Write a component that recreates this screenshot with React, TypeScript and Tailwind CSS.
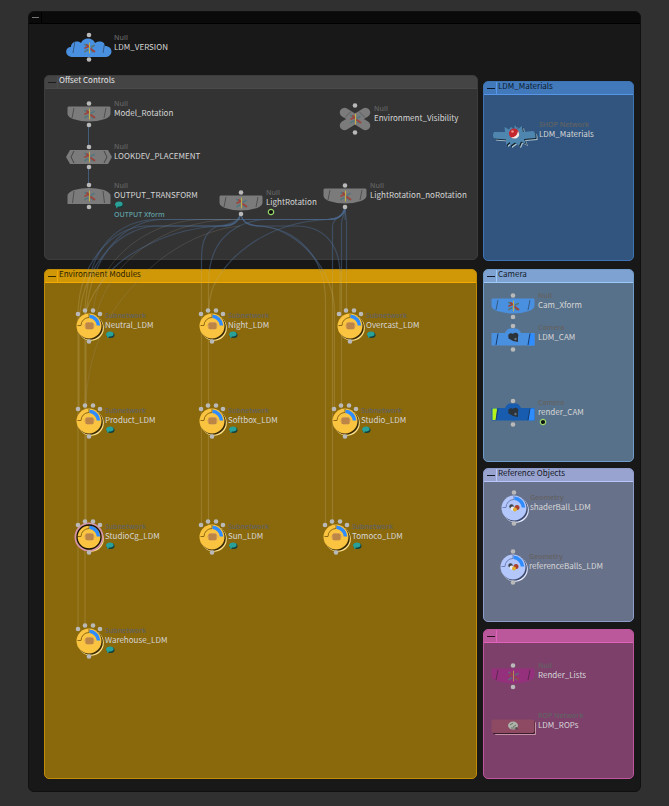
import type { ReactNode } from "react";

type Kind =
  | "cloud"
  | "bowl"
  | "hex"
  | "dome"
  | "cross"
  | "subnet"
  | "burst"
  | "camera"
  | "geometry"
  | "rop";

interface NodeData {
  kind: Kind;
  x: number;
  y: number;
  name: string;
  type: string;
  fill?: string;
  comment?: string;
  bubble?: boolean;
  badge?: boolean;
  selected?: boolean;
  dim?: boolean;
}

const GREY = "#7b7b7b";
const BLUE = "#4a90e0";

function Dot({ x, y }: { x: number; y: number }) {
  return <circle cx={x} cy={y} r="2.3" fill="#b9b9b9" />;
}

function AxisGlyph({ dim }: { dim?: boolean }) {
  return (
    <g strokeLinecap="round" opacity={dim ? 0.7 : 1}>
      <path d="M-4 3.500 L-1.500 2 M2.500 -1 L5 -2.500 M-4 -3.500 L-2.500 -2.500 M3 3 L4 3.500" stroke="#55777e" strokeWidth="2" />
      <path d="M-4 0 L-1.500 -1 M2 1 L5.500 3.500 M-2 -3 L-0.500 -1.500" stroke="#9c443c" strokeWidth="1.800" />
      <path d="M0.500 -5 V5" stroke="#c3b04a" strokeWidth="1" />
    </g>
  );
}

function Slashes({ x = 15, h = 5 }: { x?: number; h?: number }) {
  return (
    <path
      d={`M${-x + 1} ${-h - 2} L${-x - 1} ${h} M${x + 1} ${-h - 2} L${x - 1} ${h}`}
      stroke="#1a1a1a"
      strokeOpacity="0.45"
      fill="none"
    />
  );
}

function Spark({ fill }: { fill: string }) {
  return (
    <path
      d="M-20 -3 L-9 -3 L-9.500 -8 L-5 -5.500 L-3 -8 L0 -6 L1 -10 L4 -6 L8 -9 L9 -3 L19 -4 Q22 -3 21.500 3 L10 4 L12 9 L7 6.500 L5 11 L1 7.500 L-4 11 L-4 7 L-8 10 L-8 4.500 L-20 3.500 Q-22 0 -20 -3 Z"
      fill={fill}
    />
  );
}

function RoundBody({ kind, selected }: { kind: Kind; selected?: boolean }) {
  const geo = kind === "geometry";
  const fill = geo ? "#b4c7fb" : "#fac440";
  const edge = geo ? "#e4ebff" : "#ffe28c";
  const dark = geo ? "#3e4a6e" : "#3a2b05";
  return (
    <>
      <circle cx="2" cy="2" r="12.800" fill={edge} />
      <circle cx="1.200" cy="1.200" r="12.600" fill={dark} />
      {selected && <circle r="13.500" fill="none" stroke="#d493a8" strokeWidth="2" />}
      <circle r="12.500" fill={fill} />
      <path d="M-11.500 -0.500 H-8 A8 8 0 0 1 0 -8.500 V-12" stroke={geo ? "#6f80b8" : "#8d6a12"} fill="none" />
      <path d="M0.500 -9.800 A9.800 9.800 0 0 1 9.500 -0.500" stroke="#2f8cff" strokeWidth="3.600" fill="none" />
      {selected && <circle r="12" fill="none" stroke="#15110a" strokeWidth="1.300" />}
      {geo ? (
        <g>
          <circle cx="-2.500" cy="-1.500" r="2.200" fill="#3d4247" />
          <circle cx="-1.500" cy="0.500" r="2" fill="#e8ecf2" />
          <circle cx="3" cy="-0.500" r="2.500" fill="#a8402f" />
          <circle cx="1" cy="1.500" r="2" fill="#e0ae2c" />
        </g>
      ) : (
        <g>
          <rect x="-3.500" y="-4" width="8" height="7.500" rx="2" fill="#cf9a58" />
          <rect x="-4.500" y="-2" width="10" height="3.500" rx="1.500" fill="#cf9a58" />
          <path d="M-3.500 -2 H4.500 M-3 0 H4 M-3.500 2 H4.500" stroke="#a3682c" strokeWidth="0.800" />
        </g>
      )}
    </>
  );
}

const dots: Record<Kind, [number, number][]> = {
  cloud: [[0, -13], [0, 11.5]],
  bowl: [[0, -10.5], [0, 11]],
  hex: [[0, -10], [0, 10]],
  dome: [[0, -11], [0, 11]],
  cross: [[0, -13.5], [0, 13.5]],
  subnet: [[-11, -12], [-4, -15.5], [4, -15.5], [11, -12], [0, 15.5]],
  burst: [],
  camera: [[0, -12], [0, 11.5]],
  geometry: [[0, -15.5], [0, 15.5]],
  rop: [],
};

const box: Record<Kind, string> = {
  cloud: "-25 -20 50 40",
  bowl: "-25 -20 50 40",
  hex: "-25 -20 50 40",
  dome: "-25 -20 50 40",
  burst: "-25 -20 50 40",
  camera: "-25 -20 50 40",
  rop: "-25 -20 50 40",
  cross: "-19 -20 38 40",
  subnet: "-16 -20 32 40",
  geometry: "-16 -20 32 40",
};

function halfWidth(kind: Kind) {
  if (kind === "cross") return 19;
  return kind === "subnet" || kind === "geometry" ? 16 : 25;
}

function Body({ node }: { node: NodeData }) {
  const fill = node.fill ?? GREY;
  switch (node.kind) {
    case "cloud":
      return (
        <>
          <path
            d="M-17 9 C-25 8 -24 -1 -18 -1 C-18 -6 -12 -8 -8 -5 C-6 -11 4 -11 6 -5 C11 -8 16 -6 16 -2 C24 -2 25 8 17 9 Z"
            fill={BLUE}
          />
          <Slashes />
          <AxisGlyph />
        </>
      );
    case "bowl":
      return (
        <>
          <path d="M-20.500 -7.500 H20.500 Q21.500 -7.500 21.500 -6 V0 Q21 3 16 5 Q0 10 -16 5 Q-21 3 -21.500 0 V-6 Q-21.500 -7.500 -20.500 -7.500 Z" fill={fill} />
          <Slashes x={16} h={4} />
          <AxisGlyph dim={node.dim} />
        </>
      );
    case "hex":
      return (
        <>
          <path d="M-19 -7 H19 L23 0 L19 7 H-19 L-23 0 Z" fill={fill} />
          <path d="M-15 -6 L-18 0 L-15 6 M15 -6 L18 0 L15 6" stroke="#444" fill="none" />
          <AxisGlyph />
        </>
      );
    case "dome":
      return (
        <>
          <path d="M-21.500 8 V-1 Q-20 -4 -15 -6 Q0 -10 15 -6 Q20 -4 21.500 -1 V8 Z" fill={fill} />
          <path d="M-15 -5 L-16.500 7 M14 -5 L15.500 7" stroke="#1a1a1a" strokeOpacity="0.45" />
          <AxisGlyph />
        </>
      );
    case "cross":
      return (
        <>
          <path d="M-10.500 -6.500 L10.500 6.500 M10.500 -6.500 L-10.500 6.500" stroke={fill} strokeWidth="9.500" strokeLinecap="round" />
          <path d="M-10 -1.500 L-4 -7.500 M4 -7.500 L10 -1.500" stroke="#5c5c5c" />
          <AxisGlyph />
        </>
      );
    case "burst":
      return (
        <>
          <g transform="translate(2 2)"><Spark fill="#a9c3d2" /></g>
          <g transform="translate(1 1)"><Spark fill="#15222e" /></g>
          <Spark fill="#4f86b0" />
          <circle cx="0" cy="-1.500" r="5" fill="#c3262c" />
          <path d="M-3 2.500 Q3 2 4 -4 Q7 1 2.500 3.300 Q-1 4 -3 2.500 Z" fill="#f0e6e2" />
          <circle cx="-1.500" cy="-3.500" r="1.300" fill="#ef8f86" />
        </>
      );
    case "camera": {
      const render = node.dim;
      return (
        <>
          <path
            d="M-21.500 -5 H-8 Q-6 -9.500 -3 -9.500 H3 Q6 -9.500 8 -5 H21.500 V7.500 H-21.500 Z"
            fill={render ? "#175cae" : BLUE}
          />
          <path d="M17 -4.500 H21.500 V7.500 H15.500 Z" fill="#2f8cff" />
          {render && <path d="M-20.500 -4.500 H-16 L-17 7 H-20.500 Z" fill="#b4f21c" />}
          <path d="M-15 -4.500 L-17 7 M17 -4.500 L15 7" stroke="#163c70" />
          <g fill="#2b333b">
            <circle cx="-2" cy="-2" r="2.800" />
            <circle cx="2.500" cy="-2.500" r="2.800" />
            <path d="M-3 -1 H5 V4 L0 3 L-5 0 Z" />
          </g>
          <circle cx="2.500" cy="1" r="1.200" fill="#66727c" />
        </>
      );
    }
    case "rop":
      return (
        <>
          <rect x="-18" y="-4" width="41" height="13" rx="1" fill="#c693a4" />
          <rect x="-20" y="-5" width="42" height="13" rx="1" fill="#3a1c2c" />
          <rect x="-21.500" y="-6.500" width="43" height="13.500" rx="2" fill="#8e4a62" />
          <ellipse cx="0" cy="-0.500" rx="5" ry="4" fill="#aeb3aa" />
          <path d="M-3 -1 L0 -3 M0 1 L3 -1 M-2 2 L1 2" stroke="#687068" />
          <path d="M1 2 L5 4 L4 1 Z" fill="#4c4c4c" />
        </>
      );
    default:
      return <RoundBody kind={node.kind} selected={node.selected} />;
  }
}

function GraphNode({ node }: { node: NodeData }) {
  const half = halfWidth(node.kind);
  return (
    <div
      className="absolute z-20 flex items-start whitespace-nowrap"
      style={{ left: node.x - half, top: node.y - 20 }}
    >
      <svg viewBox={box[node.kind]} width={half * 2} height="40" className="shrink-0 overflow-visible" aria-hidden="true">
        <Body node={node} />
        {dots[node.kind].map(([x, y]) => (
          <Dot key={`${x},${y}`} x={x} y={y} />
        ))}
      </svg>
      <div className="pt-[6px]">
        <p className="font-['Open_Sans',sans-serif] text-[7px] font-semibold leading-[8px] text-[#626262]">{node.type}</p>
        <p className="text-[8px] leading-[10px] text-[#d6d6d6]">{node.name}</p>
        {node.bubble && (
          <svg viewBox="0 0 10 8" width="10" height="8" className="mt-px" aria-hidden="true">
            <ellipse cx="5.500" cy="4" rx="4" ry="3" fill="#123f3d" />
            <path d="M5 0.500 C8 0.500 9 2 8.500 3.500 C8 5.500 5 5.500 4 5.500 L2.500 7.500 L2 5 C0 4 1 0.500 5 0.500 Z" fill="#2aa198" />
          </svg>
        )}
        {node.comment && (
          <p className="mt-[2px] font-['Open_Sans',sans-serif] text-[7px] font-semibold leading-[8px] text-[#5f9ca0]">{node.comment}</p>
        )}
        {node.badge && (
          <svg viewBox="0 0 8 8" width="8" height="8" className="ml-[1px] mt-px" aria-hidden="true">
            <circle cx="4" cy="4" r="2.700" fill="#111" stroke="#9bdc6c" strokeWidth="1.200" />
          </svg>
        )}
      </div>
    </div>
  );
}

interface PanelProps {
  title: string;
  nodes: NodeData[];
  className: string;
  headerClass: string;
  dividerClass: string;
}

function Panel({ title, nodes, className, headerClass, dividerClass }: PanelProps) {
  return (
    <section className={`relative rounded-[5px] border ${className}`} aria-label={title || "Outputs"}>
      <header className={`flex h-[13px] items-start rounded-t-[4px] border-b ${headerClass}`}>
        <button
          type="button"
          aria-label={`Collapse ${title || "Outputs"}`}
          className={`flex h-3 w-[13px] items-center justify-end border-r pr-px ${dividerClass}`}
        >
          <span className="h-px w-2 bg-current" />
        </button>
        <h2 className="pl-[1px] text-[8px] leading-[8px]">{title}</h2>
      </header>
      {nodes.map((node) => (
        <GraphNode key={node.name} node={node} />
      ))}
    </section>
  );
}

const WIRES = [
  "M240.500 213 C240 222 232 226 222 226 H145 C112 228 80 262 78 312 V630",
  "M240.500 213 C240 222 232 226 222 226 H155 C118 228 80 268 79 326 V410",
  "M240.500 213 C240 222 232 226 222 226 C165 228 124 256 110 272 C98 285 90 298 85 314",
  "M345 208 C343 216 338 219.500 328 219.500 H160 C118 219 88 246 85 310 V625",
  "M345 208 C343 216 338 219.500 328 219.500 H160 C125 222 92 252 86 314 V520",
  "M240.500 213 C240 222 226 225 218 226 C202 232 201.500 248 201.500 262 V525",
  "M345 208 C343 216 338 219.500 328 219.500 H265 C228 222 209 246 208.500 282 V525",
  "M345 208 C343 216 338 219.500 328 219.500 C262 222 222 262 212 290 Q209 300 208.500 310",
  "M240.500 213 C242 222 248 226 258 226 C300 228 325 260 325.500 300 V525",
  "M240.500 213 C242 222 248 226 262 226 C300 230 334 272 334.500 310 V410",
  "M240.500 213 C242 222 248 226 262 226 H296 C322 226 340 242 340 275 V313",
  "M345 208 C345 218 333 216 332.500 226 V525",
  "M345 208 C345 216 341.500 216 341.500 224 V410",
  "M345 208 C345 214 346.500 216 346.500 222 V311",
  "M345 208 V220",
];

const FAINT_WIRES = [
  "M240 219.500 H200 C145 222 96 262 93 314",
  "M240 226 C200 230 160 254 135 284 C100 320 88 360 85 410",
  "M230 219.500 C160 222 112 262 97 312",
];

function Wires() {
  return (
    <svg
      viewBox="28 11 613 781"
      width="613"
      height="781"
      className="pointer-events-none absolute -left-px -top-px z-10"
      fill="none"
      aria-hidden="true"
    >
      <defs>
        <linearGradient id="wire" gradientUnits="userSpaceOnUse" x1="0" y1="268" x2="0" y2="272">
          <stop offset="0" stopColor="#4a678c" stopOpacity="0.5" />
          <stop offset="1" stopColor="#bfae72" stopOpacity="0.28" />
        </linearGradient>
      </defs>
      <g stroke="url(#wire)" strokeWidth="1.200">
        {WIRES.map((d) => (
          <path key={d} d={d} />
        ))}
      </g>
      <g stroke="#9a958a" strokeOpacity="0.22">
        {FAINT_WIRES.map((d) => (
          <path key={d} d={d} />
        ))}
      </g>
      <path d="M88.500 124 V147 M88.500 167 V185 M513 317 V326" stroke="#4a678c" strokeOpacity="0.8" />
    </svg>
  );
}

const subnet = (name: string, x: number, y: number, selected = false): NodeData => ({
  kind: "subnet",
  type: "Subnetwork",
  bubble: true,
  name,
  x,
  y,
  selected,
});

const offsetNodes: NodeData[] = [
  { kind: "bowl", x: 44, y: 38, type: "Null", name: "Model_Rotation" },
  { kind: "hex", x: 44, y: 81, type: "Null", name: "LOOKDEV_PLACEMENT" },
  { kind: "dome", x: 44, y: 120, type: "Null", name: "OUTPUT_TRANSFORM", bubble: true, comment: "OUTPUT Xform" },
  { kind: "bowl", x: 196, y: 127, type: "Null", name: "LightRotation", badge: true },
  { kind: "cross", x: 310, y: 43, type: "Null", name: "Environment_Visibility" },
  { kind: "bowl", x: 300, y: 120, type: "Null", name: "LightRotation_noRotation" },
];

const environmentNodes: NodeData[] = [
  subnet("Neutral_LDM", 44, 56),
  subnet("Night_LDM", 167, 56),
  subnet("Overcast_LDM", 305, 56),
  subnet("Product_LDM", 44, 151),
  subnet("Softbox_LDM", 167, 151),
  subnet("Studio_LDM", 300, 151),
  subnet("StudioCg_LDM", 44, 267, true),
  subnet("Sun_LDM", 167, 267),
  subnet("Tomoco_LDM", 291, 267),
  subnet("Warehouse_LDM", 44, 371),
];

const cameraNodes: NodeData[] = [
  { kind: "bowl", x: 29, y: 36, type: "Null", name: "Cam_Xform", fill: BLUE },
  { kind: "camera", x: 29, y: 68, type: "Camera", name: "LDM_CAM" },
  { kind: "camera", x: 29, y: 143, type: "Camera", name: "render_CAM", dim: true, badge: true },
];

const referenceNodes: NodeData[] = [
  { kind: "geometry", x: 30, y: 39, type: "Geometry", name: "shaderBall_LDM" },
  { kind: "geometry", x: 29, y: 98, type: "Geometry", name: "referenceBalls_LDM" },
];

const outputNodes: NodeData[] = [
  { kind: "bowl", x: 29, y: 46, type: "Null", name: "Render_Lists", fill: "#94307c", dim: true },
  { kind: "rop", x: 29, y: 96, type: "ROP Network", name: "LDM_ROPs" },
];

function Column({ className, children }: { className: string; children: ReactNode }) {
  return <div className={`flex flex-col ${className}`}>{children}</div>;
}

export default function App() {
  return (
    <main className="min-h-screen bg-[#303030] px-7 pb-[14px] pt-[11px] font-['Noto_Sans_CJK_SC',sans-serif]">
      <div className="relative isolate rounded-[6px] border border-[#101010] bg-[#181818] pb-3">
        <header className="flex h-3 rounded-t-[5px] border-b border-black bg-[#0a0a0a]">
          <button
            type="button"
            aria-label="Collapse network"
            className="flex w-[13px] items-center justify-end border-r border-black pr-[2px] text-[#777]"
          >
            <span className="h-px w-[7px] bg-current" />
          </button>
        </header>
        <Wires />
        <div className="relative h-[51px]">
          <GraphNode node={{ kind: "cloud", x: 60, y: 24, type: "Null", name: "LDM_VERSION" }} />
        </div>
        <div className="flex gap-[5px] pl-[15px] pr-[6px]">
          <Column className="min-w-0 flex-1 gap-[9px]">
            <Panel
              title="Offset Controls"
              nodes={offsetNodes}
              className="h-[185px] border-[#3c3c3c] bg-[#333333]"
              headerClass="border-[#4a4a4a] bg-[#444444] text-[#e6e6e6]"
              dividerClass="border-[#4d4d4d] text-[#1c1c1c]"
            />
            <Panel
              title="Environment Modules"
              nodes={environmentNodes}
              className="mr-px h-[510px] border-[#c08c08] bg-[#8a680c]"
              headerClass="border-[#f5aa00] bg-[#d09706] text-[#2a1f04]"
              dividerClass="border-[#f0a800] text-[#3a2a00]"
            />
          </Column>
          <Column className="w-[151px] pt-[6px]">
            <Panel
              title="LDM_Materials"
              nodes={[{ kind: "burst", x: 30, y: 53, type: "SHOP Network", name: "LDM_Materials" }]}
              className="h-[180px] border-[#3f74b4] bg-[#31557e]"
              headerClass="border-[#5596e8] bg-[#4279bb] text-[#0b1a2c]"
              dividerClass="border-[#5596e8] text-[#0b1a2c]"
            />
            <Panel
              title="Camera"
              nodes={cameraNodes}
              className="mt-[8px] h-[193px] border-[#6f9cc8] bg-[#58718a]"
              headerClass="border-[#9cc8fa] bg-[#7ea2d2] text-[#131c28]"
              dividerClass="border-[#9cc8fa] text-[#131c28]"
            />
            <Panel
              title="Reference Objects"
              nodes={referenceNodes}
              className="mt-[6px] h-[154px] border-[#8e9ccc] bg-[#68718a]"
              headerClass="border-[#b8c6fb] bg-[#98a3d0] text-[#141724]"
              dividerClass="border-[#b8c6fb] text-[#141724]"
            />
            <Panel
              title=""
              nodes={outputNodes}
              className="mt-[7px] h-[150px] border-[#c0559e] bg-[#7d406b]"
              headerClass="border-[#e062ba] bg-[#bb589c] text-[#2a0f22]"
              dividerClass="border-[#e062ba] text-[#2a0f22]"
            />
          </Column>
        </div>
      </div>
    </main>
  );
}
